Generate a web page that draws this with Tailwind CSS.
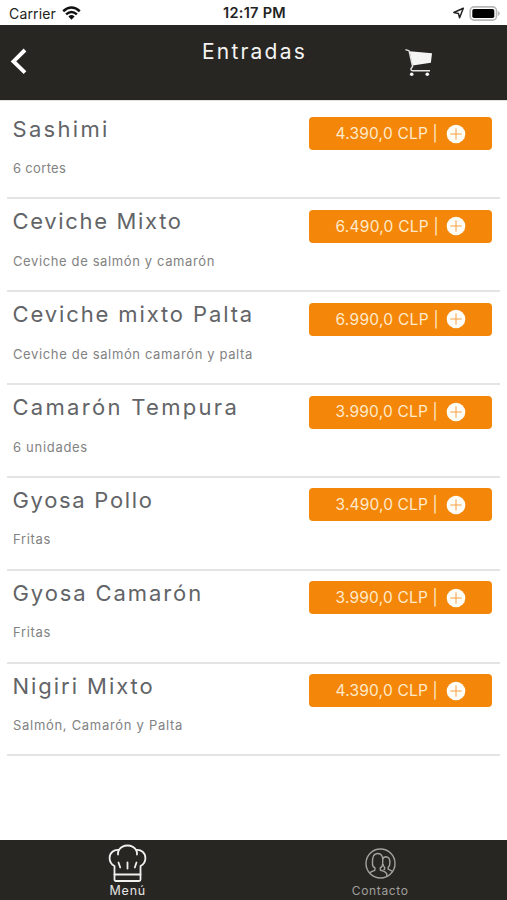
<!DOCTYPE html>
<html lang="es">
<head>
<meta charset="utf-8">
<title>Entradas</title>
<script src="https://cdn.jsdelivr.net/npm/@tailwindcss/browser@4"></script>
</head>
<body class="bg-white font-['Inter',sans-serif]">
<svg class="hidden">
  <symbol id="plus" viewBox="0 0 20 20">
    <circle cx="10" cy="10" r="9.3" fill="#fffdf8"/>
    <path d="M10 4.3v11.4M4.3 10h11.4" stroke="#f5a040" stroke-width="1"/>
  </symbol>
</svg>
<div class="flex h-[900px] w-[507px] flex-col overflow-hidden">
  <div class="grid h-[25px] shrink-0 grid-cols-[1fr_auto_1fr] items-center pt-[2px] pr-[7px] pl-[9px] text-[14px] leading-none text-[#222]">
    <div class="flex items-center gap-[6px]">
      <span class="tracking-[0.15px]">Carrier</span>
      <svg class="mt-[-1px] h-[14px] w-[19px]" viewBox="0 0 19 14" fill="none" stroke="#111" stroke-width="2.5">
        <path d="M1.2 5.2Q9.5-2.2 17.8 5.2M4.1 8.4Q9.5 3.6 14.9 8.4"/>
        <path d="M6.4 10.4Q9.5 7.8 12.6 10.4L9.5 13.8Z" fill="#111" stroke="none"/>
      </svg>
    </div>
    <span class="text-[14.5px] font-semibold tracking-[0.3px]">12:17 PM</span>
    <div class="flex items-center justify-end gap-[4px]">
      <svg class="mt-[-1px] h-[12px] w-[13px]" viewBox="0 0 13 12" fill="none" stroke="#222" stroke-width="1.5" stroke-linejoin="round"><path d="M11.3 1.2L1.8 5.5l4.6 1L7.600 10.7z"/></svg>
      <svg class="mt-[-1px] h-[15px] w-[31px]" viewBox="0 0 31 15"><rect x="1.2" y=".9" width="26.3" height="13.2" rx="3.8" fill="#fff" stroke="#b8b8b6" stroke-width="1.6"/><rect x="3.3" y="2.9" width="22" height="9.2" rx="1.8" fill="#000"/><path d="M28.8 5v5q2-.8 2-2.5t-2-2.5" fill="#b8b8b6"/></svg>
    </div>
  </div>

  <header class="flex h-[74.5px] shrink-0 items-start bg-[#282623] pl-[10px] text-white">
    <svg class="mt-[23px] h-[27px] w-[17px]" viewBox="0 0 17 27" fill="none" stroke="#fff" stroke-width="3.9"><path d="M15 2L3.5 13.4 15 24.6"/></svg>
    <h1 class="mt-[14px] ml-[175px] w-[203px] text-[21px] leading-[26px] font-normal tracking-[2.2px] whitespace-nowrap text-[#f4f4f2]">Entradas</h1>
    <svg class="mt-[22.5px] h-[29px] w-[28px]" viewBox="0 0 28 29">
      <path d="M4.6 3.3L27 5.3l-1.1 9.4L7.6 17.5z" fill="#f5f5f3"/>
      <path d="M.4 1.6L4 2.7 7.6 18.5 6 20.6q-.3 2.2 2 2.2h17" fill="none" stroke="#e4e4e2" stroke-width="1.4"/>
      <circle cx="6.7" cy="26.3" r="1.8" fill="#f5f5f3"/><circle cx="22.3" cy="26.3" r="1.8" fill="#f5f5f3"/>
    </svg>
  </header>

  <main class="flex-1 border-t border-[#e4e2df] px-[7px] pt-[6px]">
    <section class="flex h-[92.85px] justify-between border-b-2 border-[#e4e4e4] pr-[8px] pl-[5px]">
      <div class="whitespace-nowrap"><h2 class="mt-[7px] pl-[0.5px] text-[22px] leading-[30px] tracking-[2.3px] text-[#626467]">Sashimi</h2><p class="mt-[14.5px] pl-px text-[13px] leading-[20px] tracking-[0.32px] text-[#828282]">6 cortes</p></div>
      <button class="mt-[10.5px] flex h-[33px] w-[183.5px] items-center rounded-[4px] bg-[#f48709] pl-[27px] text-[15.5px] text-[#ffeacb]"><span class="w-[110.5px] text-left tracking-[0.2px] whitespace-nowrap">4.390,0 CLP |</span><svg class="size-[20px]"><use href="#plus"/></svg></button>
    </section>
    <section class="flex h-[92.85px] justify-between border-b-2 border-[#e4e4e4] pr-[8px] pl-[5px]">
      <div class="whitespace-nowrap"><h2 class="mt-[7px] pl-[0.5px] text-[22px] leading-[30px] tracking-[1.66px] text-[#626467]">Ceviche Mixto</h2><p class="mt-[14.5px] pl-px text-[13px] leading-[20px] tracking-[0.62px] text-[#828282]">Ceviche de salmón y camarón</p></div>
      <button class="mt-[10.5px] flex h-[33px] w-[183.5px] items-center rounded-[4px] bg-[#f48709] pl-[27px] text-[15.5px] text-[#ffeacb]"><span class="w-[110.5px] text-left tracking-[0.24px] whitespace-nowrap">6.490,0 CLP |</span><svg class="size-[20px]"><use href="#plus"/></svg></button>
    </section>
    <section class="flex h-[92.85px] justify-between border-b-2 border-[#e4e4e4] pr-[8px] pl-[5px]">
      <div class="whitespace-nowrap"><h2 class="mt-[7px] pl-[0.5px] text-[22px] leading-[30px] tracking-[1.88px] text-[#626467]">Ceviche mixto Palta</h2><p class="mt-[14.5px] pl-px text-[13px] leading-[20px] tracking-[0.625px] text-[#828282]">Ceviche de salmón camarón y palta</p></div>
      <button class="mt-[10.5px] flex h-[33px] w-[183.5px] items-center rounded-[4px] bg-[#f48709] pl-[27px] text-[15.5px] text-[#ffeacb]"><span class="w-[110.5px] text-left tracking-[0.28px] whitespace-nowrap">6.990,0 CLP |</span><svg class="size-[20px]"><use href="#plus"/></svg></button>
    </section>
    <section class="flex h-[92.85px] justify-between border-b-2 border-[#e4e4e4] pr-[8px] pl-[5px]">
      <div class="whitespace-nowrap"><h2 class="mt-[7px] pl-[0.5px] text-[22px] leading-[30px] tracking-[2.3px] text-[#626467]">Camarón Tempura</h2><p class="mt-[14.5px] pl-px text-[13px] leading-[20px] tracking-[0.7px] text-[#828282]">6 unidades</p></div>
      <button class="mt-[10.5px] flex h-[33px] w-[183.5px] items-center rounded-[4px] bg-[#f48709] pl-[27px] text-[15.5px] text-[#ffeacb]"><span class="w-[110.5px] text-left tracking-[0.19px] whitespace-nowrap">3.990,0 CLP |</span><svg class="size-[20px]"><use href="#plus"/></svg></button>
    </section>
    <section class="flex h-[92.85px] justify-between border-b-2 border-[#e4e4e4] pr-[8px] pl-[5px]">
      <div class="whitespace-nowrap"><h2 class="mt-[7px] pl-[0.5px] text-[22px] leading-[30px] tracking-[1.68px] text-[#626467]">Gyosa Pollo</h2><p class="mt-[14.5px] pl-px text-[13px] leading-[20px] tracking-[0.65px] text-[#828282]">Fritas</p></div>
      <button class="mt-[10.5px] flex h-[33px] w-[183.5px] items-center rounded-[4px] bg-[#f48709] pl-[27px] text-[15.5px] text-[#ffeacb]"><span class="w-[110.5px] text-left tracking-[0.15px] whitespace-nowrap">3.490,0 CLP |</span><svg class="size-[20px]"><use href="#plus"/></svg></button>
    </section>
    <section class="flex h-[92.85px] justify-between border-b-2 border-[#e4e4e4] pr-[8px] pl-[5px]">
      <div class="whitespace-nowrap"><h2 class="mt-[7px] pl-[0.5px] text-[22px] leading-[30px] tracking-[1.9px] text-[#626467]">Gyosa Camarón</h2><p class="mt-[14.5px] pl-px text-[13px] leading-[20px] tracking-[0.65px] text-[#828282]">Fritas</p></div>
      <button class="mt-[10.5px] flex h-[33px] w-[183.5px] items-center rounded-[4px] bg-[#f48709] pl-[27px] text-[15.5px] text-[#ffeacb]"><span class="w-[110.5px] text-left tracking-[0.19px] whitespace-nowrap">3.990,0 CLP |</span><svg class="size-[20px]"><use href="#plus"/></svg></button>
    </section>
    <section class="flex h-[92.85px] justify-between border-b-2 border-[#e4e4e4] pr-[8px] pl-[5px]">
      <div class="whitespace-nowrap"><h2 class="mt-[7px] pl-[0.5px] text-[22px] leading-[30px] tracking-[1.96px] text-[#626467]">Nigiri Mixto</h2><p class="mt-[14.5px] pl-px text-[13px] leading-[20px] tracking-[0.7px] text-[#828282]">Salmón, Camarón y Palta</p></div>
      <button class="mt-[10.5px] flex h-[33px] w-[183.5px] items-center rounded-[4px] bg-[#f48709] pl-[27px] text-[15.5px] text-[#ffeacb]"><span class="w-[110.5px] text-left tracking-[0.2px] whitespace-nowrap">4.390,0 CLP |</span><svg class="size-[20px]"><use href="#plus"/></svg></button>
    </section>
  </main>

  <nav class="grid h-[60px] shrink-0 grid-cols-2 bg-[#282623] text-[12px] leading-[16px]">
    <a class="flex flex-col items-center pt-[4px] pl-[2px] text-[#e4e4e2]">
      <svg class="h-[38px] w-[39px]" viewBox="0 0 39 38" fill="none" stroke="#f0f0ee" stroke-width="1.8" stroke-linecap="round" stroke-linejoin="round">
        <path d="M6.500 30.500V22Q1.600 19.500 1.600 14C1.600 8.500 6 5.400 10.800 6Q14 1.500 19.500 1.500T28.200 6C33 5.400 37.400 8.500 37.400 14Q37.400 19.500 32.500 22V30.500"/>
        <path d="M6.500 30.500H32.500V35.500Q32.500 37 31 37H8Q6.500 37 6.500 35.500Z"/>
        <path d="M19.500 18.500v6M10.500 18.500l1.700 5M28.500 18.500l-1.700 5M10.800 6Q9.800 8 10 10.500M28.200 6Q29.200 8 29 10.500"/>
      </svg>
      <span class="mt-px text-[12.5px] tracking-[0.8px]">Menú</span>
    </a>
    <a class="flex flex-col items-center pt-[8px] text-[#a09f9c]">
      <svg class="h-[31px] w-[31px]" viewBox="0 0 31 31" fill="none" stroke="#a3a29f" stroke-width="1.4" stroke-linejoin="round">
        <circle cx="15.500" cy="15.500" r="14.500"/>
        <path d="M4.500 25Q6 23.500 9.800 22.300L10 20Q7.300 18.700 7.500 15.500Q6.800 5.500 12.800 5.500T17.700 15.500Q17.800 18.700 15.200 20L15.500 22.300Q20.500 23.500 21.800 25.800V28"/>
        <path d="M17.800 11Q18.300 8.700 21 8.700Q25.500 9 24.800 15.500Q25 18 23.200 19.300V21.200L27.500 23.300M18 16Q17.800 18 19.600 19.300V21.200L18.500 22"/>
      </svg>
      <span class="mt-[4px] tracking-[0.65px]">Contacto</span>
    </a>
  </nav>
</div>
</body>
</html>
